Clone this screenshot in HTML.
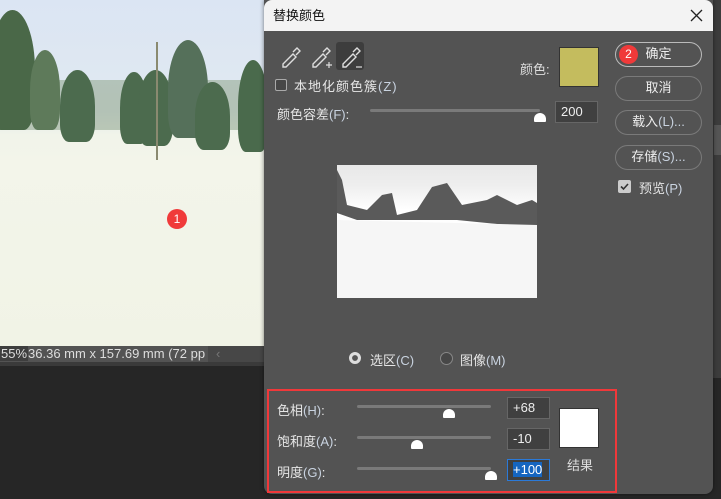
<!DOCTYPE html>
<html><head><meta charset="utf-8">
<style>
*{margin:0;padding:0;box-sizing:border-box}
body{width:721px;height:499px;overflow:hidden;background:#262626;position:relative;font-family:"Liberation Sans","Noto Sans CJK SC",sans-serif;font-size:13px;color:#e6e6e6}
.a{position:absolute}
.p{color:#c9d3e0}
.btn{position:absolute;left:615px;width:87px;height:25px;border:1.5px solid #7a7a7a;border-radius:13px;text-align:center;line-height:22px;color:#eee;font-size:13px}
.track{position:absolute;height:3px;background:#7a7a7a;border-radius:2px}
.thumb{position:absolute;width:12px;height:9px;background:#fff;border-radius:6px 6px 1px 1px}
.inp{position:absolute;background:#404040;border:1px solid #666;color:#eee;padding-left:5px;line-height:20px;font-size:13px}
.t{position:absolute;background:#4c6b4e;border-radius:50% 50% 25% 25%}
</style></head><body>
<!-- canvas -->
<div class="a" style="left:0;top:0;width:264px;height:346px;background:linear-gradient(#dbe5f3 0,#dfe8f2 80px,#dfe6ea 110px,#f1f4ea 135px,#f3f5ea 160px,#f1f3e6 346px)"></div>
<div class="a" style="left:0;top:80px;width:264px;height:50px;background:#8ea48a;opacity:.55"></div>
<div class="t" style="left:-10px;top:10px;width:45px;height:120px;background:#4a6848"></div>
<div class="t" style="left:30px;top:50px;width:30px;height:80px;background:#5e7a5a"></div>
<div class="t" style="left:60px;top:70px;width:35px;height:72px"></div>
<div class="t" style="left:120px;top:72px;width:28px;height:72px"></div>
<div class="t" style="left:138px;top:70px;width:35px;height:76px"></div>
<div class="t" style="left:168px;top:40px;width:40px;height:98px;background:#55705a"></div>
<div class="t" style="left:195px;top:82px;width:35px;height:68px"></div>
<div class="t" style="left:238px;top:60px;width:30px;height:92px;background:#4a6a4c"></div>
<div class="a" style="left:156px;top:42px;width:2px;height:118px;background:#8a8a70"></div>
<div class="a" style="left:167px;top:209px;width:20px;height:20px;border-radius:50%;background:#f03a3a;color:#fff;font-size:12px;text-align:center;line-height:20px">1</div>
<div class="a" style="left:0;top:346px;width:264px;height:16px;background:#535353;font-size:13px;color:#ddd;line-height:16px;white-space:nowrap;overflow:hidden">
<span style="background:#3e3e3e;padding:0 1px">55%</span>36.36 mm x 157.69 mm (72 pp <span style="color:#aaa">›</span>
<div class="a" style="left:208px;top:0;width:56px;height:16px;background:#474747;color:#777;padding-left:8px">‹</div></div>
<div class="a" style="left:0;top:362px;width:264px;height:4px;background:#3a3a3a"></div>
<!-- right panel strip -->
<div class="a" style="left:712px;top:0;width:9px;height:378px;background:#3c3c3c"></div>
<div class="a" style="left:714px;top:125px;width:7px;height:30px;background:#555"></div>
<div class="a" style="left:712px;top:378px;width:9px;height:121px;background:#262626"></div>
<!-- dialog -->
<div class="a" style="left:264px;top:0;width:449px;height:494px;background:#535353;border-radius:0 0 8px 8px;box-shadow:0 0 4px rgba(0,0,0,.5)"></div>
<div class="a" style="left:264px;top:0;width:449px;height:31px;background:#f3f3f3;border-radius:8px 8px 0 0;color:#111;font-size:13px;line-height:31px;padding-left:9px">替换颜色</div>
<svg class="a" style="left:690px;top:9px" width="13" height="13"><path d="M1 1L12 12M12 1L1 12" stroke="#222" stroke-width="1.3"/></svg>
<!-- eyedroppers -->
<svg class="a" style="left:280px;top:41px" width="100" height="30">
<g fill="none" stroke="#ddd" stroke-width="1.4">
<path d="M3 23l10-10 3 3-10 10-3 0z"/><path d="M13 11l4-4 3 3-4 4"/>
<path d="M33 23l10-10 3 3-10 10-3 0z"/><path d="M43 11l4-4 3 3-4 4"/>
</g>
<path d="M49 21v6M46 24h6" stroke="#ddd" stroke-width="1.2"/>
<rect x="56" y="1" width="28" height="28" rx="3" fill="#3d3d3d"/>
<g fill="none" stroke="#ddd" stroke-width="1.4"><path d="M63 23l10-10 3 3-10 10-3 0z"/><path d="M73 11l4-4 3 3-4 4"/></g>
<path d="M76 26h6" stroke="#ddd" stroke-width="1.2"/>
</svg>
<div class="a" style="left:520px;top:59px;color:#ddd">颜色:</div>
<div class="a" style="left:559px;top:47px;width:40px;height:40px;background:#c4bc5e;border:1px solid #333"></div>
<div class="a" style="left:275px;top:79px;width:12px;height:12px;border:1.3px solid #aaa;border-radius:2px;background:#474747"></div>
<div class="a" style="left:294px;top:76px;letter-spacing:1px">本地化颜色簇<span class="p">(Z)</span></div>
<div class="a" style="left:277px;top:104px">颜色容差<span class="p">(F)</span>:</div>
<div class="track" style="left:370px;top:109px;width:170px"></div>
<div class="thumb" style="left:534px;top:113px"></div>
<div class="inp" style="left:555px;top:101px;width:43px;height:22px">200</div>
<!-- buttons -->
<div class="btn" style="top:42px;border-color:#bbb">确定</div>
<div class="a" style="left:619px;top:45px;width:19px;height:19px;border-radius:50%;background:#f03a3a;color:#fff;font-size:12px;text-align:center;line-height:19px">2</div>
<div class="btn" style="top:76px">取消</div>
<div class="btn" style="top:110px">载入<span class="p">(L)...</span></div>
<div class="btn" style="top:145px">存储<span class="p">(S)...</span></div>
<div class="a" style="left:618px;top:180px;width:13px;height:13px;background:#ccc;border-radius:2px"></div>
<svg class="a" style="left:618px;top:180px" width="13" height="13"><path d="M3 6.5l2.5 2.5 4.5-5" stroke="#333" stroke-width="1.6" fill="none"/></svg>
<div class="a" style="left:639px;top:178px">预览<span class="p">(P)</span></div>
<!-- preview -->
<div class="a" style="left:337px;top:165px;width:200px;height:133px;background:linear-gradient(#e8e8e8 0,#eee 20px,#fff 45px,#fafafa 133px);overflow:hidden">
<svg width="200" height="133"><path d="M0 5 L5 15 L10 40 L30 45 L45 30 L55 28 L60 50 L80 45 L95 22 L110 18 L125 40 L150 35 L160 30 L180 40 L195 35 L200 38 L200 66 L170 60 L120 55 L60 55 L20 55 L0 48 Z" fill="#5a5a5a"/>
<path d="M0 55 L200 60 L200 133 L0 133Z" fill="#f6f6f6"/></svg></div>
<!-- radios -->
<div class="a" style="left:349px;top:352px;width:12px;height:12px;border-radius:50%;background:#ddd;border:3px solid #ddd;box-shadow:inset 0 0 0 2px #555"></div>
<div class="a" style="left:353px;top:356px;width:4px;height:4px;border-radius:50%;background:#555"></div>
<div class="a" style="left:370px;top:350px">选区<span class="p">(C)</span></div>
<div class="a" style="left:440px;top:352px;width:13px;height:13px;border-radius:50%;border:1.3px solid #888;background:#474747"></div>
<div class="a" style="left:460px;top:350px">图像<span class="p">(M)</span></div>
<!-- red box -->
<div class="a" style="left:267px;top:389px;width:350px;height:104px;border:2px solid #f0383a"></div>
<div class="a" style="left:277px;top:400px">色相<span class="p">(H)</span>:</div>
<div class="track" style="left:357px;top:405px;width:134px"></div>
<div class="thumb" style="left:443px;top:409px"></div>
<div class="inp" style="left:507px;top:397px;width:43px;height:22px">+68</div>
<div class="a" style="left:277px;top:431px">饱和度<span class="p">(A)</span>:</div>
<div class="track" style="left:357px;top:436px;width:134px"></div>
<div class="thumb" style="left:411px;top:440px"></div>
<div class="inp" style="left:507px;top:428px;width:43px;height:22px">-10</div>
<div class="a" style="left:277px;top:462px">明度<span class="p">(G)</span>:</div>
<div class="track" style="left:357px;top:467px;width:134px"></div>
<div class="thumb" style="left:485px;top:471px"></div>
<div class="inp" style="left:507px;top:459px;width:43px;height:22px;border-color:#2b7ad8;background:#404040"><span style="background:#1565c0;color:#fff">+100</span></div>
<div class="a" style="left:559px;top:408px;width:40px;height:40px;background:#fff;border:1px solid #333"></div>
<div class="a" style="left:567px;top:455px;color:#ddd">结果</div>
</body></html>
